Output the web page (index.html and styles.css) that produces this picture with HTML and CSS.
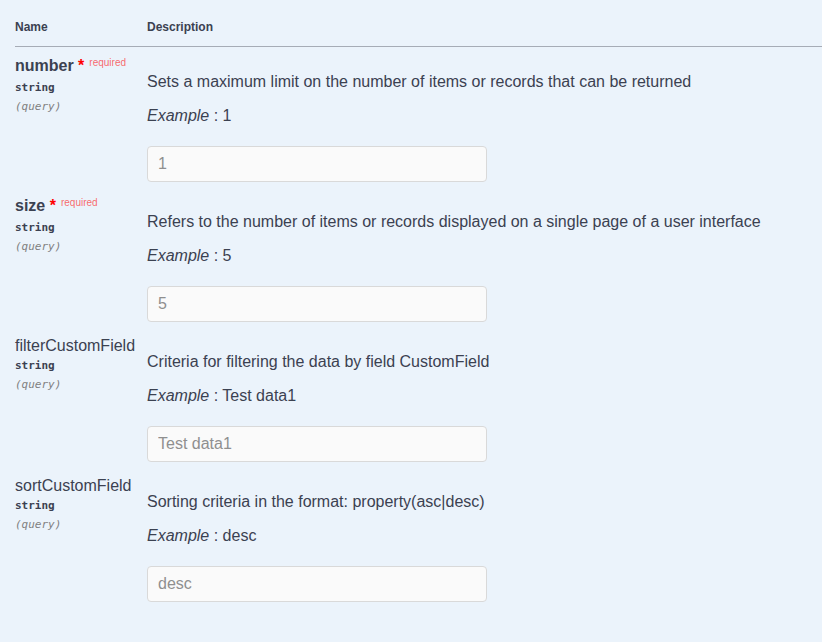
FILE: index.html
```html
<!DOCTYPE html>
<html>
<head>
<meta charset="utf-8">
<link rel="stylesheet" href="styles.css">
</head>
<body>
<div class="params">
  <div class="head">
    <div class="col-name">Name</div>
    <div class="col-desc">Description</div>
  </div>

  <div class="row">
    <div class="col-name">
      <div class="pname req">number<span class="star">&nbsp;*</span><span class="reqtxt">required</span></div>
      <div class="ptype">string</div>
      <div class="pin">(query)</div>
    </div>
    <div class="col-desc">
      <p>Sets a maximum limit on the number of items or records that can be returned</p>
      <p><i>Example</i> : 1</p>
      <input class="field" type="text" placeholder="1">
    </div>
  </div>

  <div class="row">
    <div class="col-name">
      <div class="pname req">size<span class="star">&nbsp;*</span><span class="reqtxt">required</span></div>
      <div class="ptype">string</div>
      <div class="pin">(query)</div>
    </div>
    <div class="col-desc">
      <p>Refers to the number of items or records displayed on a single page of a user interface</p>
      <p><i>Example</i> : 5</p>
      <input class="field" type="text" placeholder="5">
    </div>
  </div>

  <div class="row">
    <div class="col-name">
      <div class="pname">filterCustomField</div>
      <div class="ptype">string</div>
      <div class="pin">(query)</div>
    </div>
    <div class="col-desc">
      <p>Criteria for filtering the data by field CustomField</p>
      <p><i>Example</i> : Test data1</p>
      <input class="field" type="text" placeholder="Test data1">
    </div>
  </div>

  <div class="row">
    <div class="col-name">
      <div class="pname">sortCustomField</div>
      <div class="ptype">string</div>
      <div class="pin">(query)</div>
    </div>
    <div class="col-desc">
      <p>Sorting criteria in the format: property(asc|desc)</p>
      <p><i>Example</i> : desc</p>
      <input class="field" type="text" placeholder="desc">
    </div>
  </div>
</div>
</body>
</html>
```

FILE: styles.css
```css
html, body {
  margin: 0;
  padding: 0;
  background: #ebf3fb;
  font-family: "Liberation Sans", Arial, sans-serif;
  color: #3b4151;
}

.params {
  padding-left: 15px;
}

.head {
  display: flex;
  font-size: 12px;
  font-weight: bold;
  line-height: 14px;
  padding: 20px 0 12px;
  border-bottom: 1px solid #a6acb6;
}

.col-name {
  width: 132px;
  flex: none;
}

.col-desc {
  flex: 1;
}

.row {
  display: flex;
  padding: 10px 0 5px;
}

.pname {
  font-size: 16px;
  line-height: 18px;
}

.pname.req {
  font-weight: bold;
}

.star {
  color: #ff0000;
  font-size: 16px;
}

.reqtxt {
  color: rgba(255, 0, 0, 0.6);
  font-size: 10px;
  font-weight: normal;
  padding: 0 0 0 5px;
  position: relative;
  top: -5px;
}

.ptype {
  font-family: "DejaVu Sans Mono", monospace;
  font-size: 11px;
  font-weight: bold;
  line-height: 15px;
  padding-top: 3px;
}

.pin {
  font-family: "DejaVu Sans Mono", monospace;
  font-size: 11px;
  font-style: italic;
  color: #808080;
  line-height: 15px;
  padding-top: 4px;
}

.col-desc p {
  margin: 16px 0 0;
  font-size: 16px;
  line-height: 18px;
}

.col-desc p:first-child {
  margin-top: 16px;
}

.field {
  display: block;
  box-sizing: border-box;
  margin-top: 21px;
  width: 340px;
  height: 36px;
  padding: 0 10px;
  border: 1px solid #d9d9d9;
  border-radius: 4px;
  background: #fafafa;
  font-family: "Liberation Sans", Arial, sans-serif;
  font-size: 16px;
  color: #3b4151;
  outline: none;
}

.field::placeholder {
  color: #8f8f8f;
}
```
